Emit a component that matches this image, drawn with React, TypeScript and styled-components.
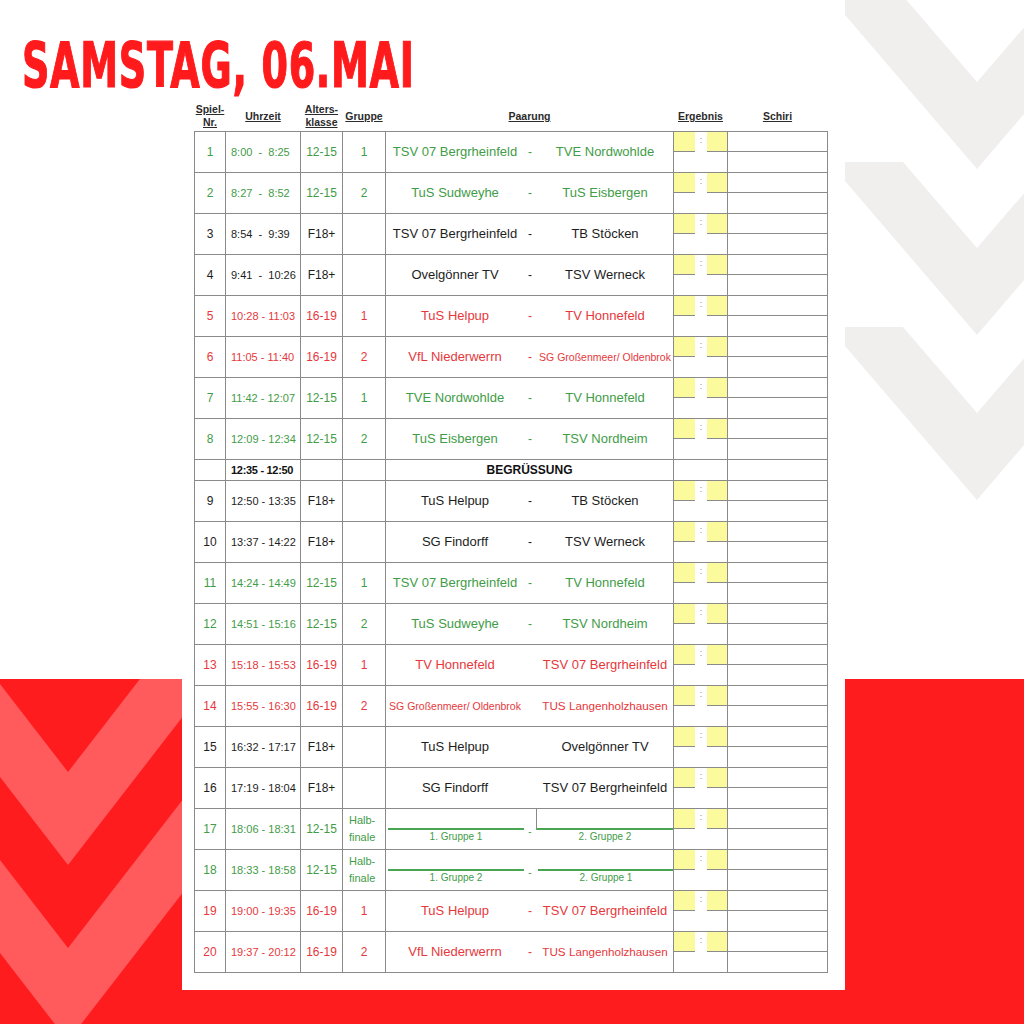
import React from "react";
import styled, { createGlobalStyle } from "styled-components";

type Tone = "green" | "red" | "black";

interface Match {
  nr: number;
  time: string;
  age: string;
  group: string;
  tone: Tone;
  home: string;
  away: string;
  homeSize?: number;
  awaySize?: number;
  dash?: boolean;
  semi?: boolean;
  divider?: boolean;
}

const TONES: Record<Tone, string> = {
  green: "#3f9c47",
  red: "#e6383c",
  black: "#1d1d1d",
};

const LINE = "#8a8a8a";

const before: Match[] = [
  { nr: 1, time: "8:00  -  8:25", age: "12-15", group: "1", tone: "green", home: "TSV 07 Bergrheinfeld", away: "TVE Nordwohlde", dash: true },
  { nr: 2, time: "8:27  -  8:52", age: "12-15", group: "2", tone: "green", home: "TuS Sudweyhe", away: "TuS Eisbergen", dash: true },
  { nr: 3, time: "8:54  -  9:39", age: "F18+", group: "", tone: "black", home: "TSV 07 Bergrheinfeld", away: "TB Stöcken", dash: true },
  { nr: 4, time: "9:41  -  10:26", age: "F18+", group: "", tone: "black", home: "Ovelgönner TV", away: "TSV Werneck", dash: true },
  { nr: 5, time: "10:28 - 11:03", age: "16-19", group: "1", tone: "red", home: "TuS Helpup", away: "TV Honnefeld", dash: true },
  { nr: 6, time: "11:05 - 11:40", age: "16-19", group: "2", tone: "red", home: "VfL Niederwerrn", away: "SG Großenmeer/ Oldenbrok", awaySize: 10.5, dash: true },
  { nr: 7, time: "11:42 - 12:07", age: "12-15", group: "1", tone: "green", home: "TVE Nordwohlde", away: "TV Honnefeld", dash: true },
  { nr: 8, time: "12:09 - 12:34", age: "12-15", group: "2", tone: "green", home: "TuS Eisbergen", away: "TSV Nordheim", dash: true },
];

const after: Match[] = [
  { nr: 9, time: "12:50 - 13:35", age: "F18+", group: "", tone: "black", home: "TuS Helpup", away: "TB Stöcken", dash: true },
  { nr: 10, time: "13:37 - 14:22", age: "F18+", group: "", tone: "black", home: "SG Findorff", away: "TSV Werneck", dash: true },
  { nr: 11, time: "14:24 - 14:49", age: "12-15", group: "1", tone: "green", home: "TSV 07 Bergrheinfeld", away: "TV Honnefeld", dash: true },
  { nr: 12, time: "14:51 - 15:16", age: "12-15", group: "2", tone: "green", home: "TuS Sudweyhe", away: "TSV Nordheim", dash: true },
  { nr: 13, time: "15:18 - 15:53", age: "16-19", group: "1", tone: "red", home: "TV Honnefeld", away: "TSV 07 Bergrheinfeld" },
  { nr: 14, time: "15:55 - 16:30", age: "16-19", group: "2", tone: "red", home: "SG Großenmeer/ Oldenbrok", homeSize: 10.5, away: "TUS Langenholzhausen", awaySize: 11.7 },
  { nr: 15, time: "16:32 - 17:17", age: "F18+", group: "", tone: "black", home: "TuS Helpup", away: "Ovelgönner TV" },
  { nr: 16, time: "17:19 - 18:04", age: "F18+", group: "", tone: "black", home: "SG Findorff", away: "TSV 07 Bergrheinfeld" },
  { nr: 17, time: "18:06 - 18:31", age: "12-15", group: "", tone: "green", home: "1. Gruppe 1", away: "2. Gruppe 2", semi: true, divider: true },
  { nr: 18, time: "18:33 - 18:58", age: "12-15", group: "", tone: "green", home: "1. Gruppe 2", away: "2. Gruppe 1", semi: true },
  { nr: 19, time: "19:00 - 19:35", age: "16-19", group: "1", tone: "red", home: "TuS Helpup", away: "TSV 07 Bergrheinfeld", dash: true },
  { nr: 20, time: "19:37 - 20:12", age: "16-19", group: "2", tone: "red", home: "VfL Niederwerrn", away: "TUS Langenholzhausen", awaySize: 11.7, dash: true },
];

const columns = [31, 75, 42, 43, 288, 54, 100];

const GlobalStyle = createGlobalStyle`
  html, body {
    margin: 0;
    padding: 0;
    background: #ffffff;
  }
  * {
    box-sizing: border-box;
  }
`;

const Page = styled.div`
  position: relative;
  width: 1024px;
  height: 1024px;
  overflow: hidden;
  background: linear-gradient(to bottom, #ffffff 0, #ffffff 679px, #ff1c1e 679px);
  font-family: "Liberation Sans", Arial, sans-serif;
`;

const Backdrop = styled.svg`
  position: absolute;
  inset: 0;
  width: 1024px;
  height: 1024px;
  z-index: 0;
`;

const Content = styled.div`
  position: relative;
  z-index: 1;
  display: flex;
  flex-direction: column;
`;

const TitleBar = styled.div`
  height: 96px;
  padding: 34px 0 0 22px;
`;

const Title = styled.h1`
  display: inline-block;
  margin: 0;
  font-family: "DejaVu Sans Condensed", "Liberation Sans", sans-serif;
  font-weight: 700;
  font-size: 63px;
  line-height: 63px;
  color: #ff1a1c;
  letter-spacing: 1px;
  -webkit-text-stroke: 1.2px #ff1a1c;
  transform-origin: left top;
  transform: scaleX(0.672);
  white-space: nowrap;
`;

const Sheet = styled.div`
  width: 663px;
  height: 894px;
  margin-left: 182px;
  padding: 4px 18px 0 12px;
  background: #ffffff;
`;

const Table = styled.table`
  width: 633px;
  table-layout: fixed;
  border-collapse: collapse;
`;

const Col = styled.col<{ $w: number }>`
  width: ${(p) => p.$w}px;
`;

const Head = styled.th`
  height: 31px;
  padding: 2px 0 0;
  border: none;
  font-size: 10.5px;
  line-height: 13px;
  font-weight: 700;
  color: #2b2b2b;
  text-decoration: underline;
  text-align: center;
  vertical-align: middle;
`;

const Row = styled.tr<{ $tone: Tone }>`
  height: 41px;
  color: ${(p) => TONES[p.$tone]};
`;

const BreakRow = styled.tr`
  height: 21px;
  color: #111111;
`;

const Cell = styled.td<{ $size?: number }>`
  border: 1px solid ${LINE};
  padding: 0;
  font-size: ${(p) => p.$size || 12}px;
  text-align: center;
  vertical-align: middle;
  white-space: pre;
  overflow: hidden;
`;

const TimeCell = styled(Cell)`
  padding-left: 5px;
  font-size: 11px;
  text-align: left;
`;

const BreakTime = styled(TimeCell)`
  font-weight: 700;
  letter-spacing: -0.3px;
`;

const BreakLabel = styled(Cell)`
  font-weight: 700;
`;

const SemiGroup = styled(Cell)`
  padding-left: 6px;
  text-align: left;
  font-size: 11px;
  line-height: 17px;
`;

const PairCell = styled(Cell)`
  vertical-align: top;
`;

const Pair = styled.div`
  display: flex;
  align-items: center;
  height: 40px;
`;

const Side = styled.span<{ $size?: number }>`
  width: 138px;
  flex: none;
  text-align: center;
  white-space: nowrap;
  font-size: ${(p) => p.$size || 13}px;
`;

const Dash = styled.span`
  width: 12px;
  flex: none;
  text-align: center;
  font-size: 12px;
`;

const SemiPair = styled.div`
  display: flex;
  height: 40px;
`;

const SemiSide = styled.div<{ $divider?: boolean }>`
  width: 138px;
  flex: none;
  display: flex;
  flex-direction: column;
  padding-left: ${(p) => (p.$divider ? 0 : 2)}px;
`;

const SemiSlot = styled.div<{ $divider?: boolean }>`
  height: 21px;
  border-bottom: 2px solid #4aa552;
  border-left: ${(p) => (p.$divider ? `1px solid ${LINE}` : "none")};
`;

const SemiLabel = styled.span`
  font-size: 10px;
  line-height: 14px;
  text-align: center;
`;

const SemiDash = styled.span`
  width: 12px;
  flex: none;
  padding-top: 17px;
  text-align: center;
  font-size: 10px;
`;

const ResultCell = styled(Cell)`
  vertical-align: top;
`;

const ScoreLine = styled.div`
  display: grid;
  grid-template-columns: 21px 12px 1fr;
  height: 20px;
`;

const ScoreBox = styled.div`
  background: #fbfb9d;
  border-bottom: 1px solid ${LINE};
`;

const Colon = styled.span`
  font-size: 9px;
  line-height: 16px;
  color: #8a8a8a;
  text-align: center;
`;

const RefTop = styled.div`
  height: 20px;
  border-bottom: 1px solid ${LINE};
`;

const MatchRow = ({ m }: { m: Match }) => (
  <Row $tone={m.tone}>
    <Cell>{m.nr}</Cell>
    <TimeCell>{m.time}</TimeCell>
    <Cell>{m.age}</Cell>
    {m.semi ? (
      <SemiGroup>
        Halb-
        <br />
        finale
      </SemiGroup>
    ) : (
      <Cell>{m.group}</Cell>
    )}
    <PairCell>
      {m.semi ? (
        <SemiPair>
          <SemiSide>
            <SemiSlot />
            <SemiLabel>{m.home}</SemiLabel>
          </SemiSide>
          <SemiDash>-</SemiDash>
          <SemiSide $divider={m.divider}>
            <SemiSlot $divider={m.divider} />
            <SemiLabel>{m.away}</SemiLabel>
          </SemiSide>
        </SemiPair>
      ) : (
        <Pair>
          <Side $size={m.homeSize}>{m.home}</Side>
          <Dash>{m.dash ? "-" : ""}</Dash>
          <Side $size={m.awaySize}>{m.away}</Side>
        </Pair>
      )}
    </PairCell>
    <ResultCell>
      <ScoreLine>
        <ScoreBox />
        <Colon>:</Colon>
        <ScoreBox />
      </ScoreLine>
    </ResultCell>
    <ResultCell>
      <RefTop />
    </ResultCell>
  </Row>
);

// grey chevrons top right, lighter red chevrons inside the red band
const greyChevron = (o: number) =>
  `845,${162 + o} 903,${162 + o} 977,${248 + o} 1051,${162 + o} 1125,${162 + o} 977,${335 + o} 845,${181 + o}`;

const redChevron = (o: number) =>
  `-137,${600 + o} -65,${600 + o} 68,${772 + o} 201,${600 + o} 273,${600 + o} 68,${865 + o}`;

export default function App() {
  return (
    <Page>
      <GlobalStyle />
      <Backdrop viewBox="0 0 1024 1024" aria-hidden="true">
        <defs>
          <clipPath id="band">
            <rect x="0" y="679" width="1024" height="345" />
          </clipPath>
        </defs>
        {[-166, 0, 165].map((o) => (
          <polygon key={o} points={greyChevron(o)} fill="#f1eeee" />
        ))}
        <g clipPath="url(#band)" fill="#ff5a5c">
          <polygon points={redChevron(0)} />
          <polygon points={redChevron(176)} />
        </g>
      </Backdrop>
      <Content>
        <TitleBar>
          <Title>SAMSTAG, 06.MAI</Title>
        </TitleBar>
        <Sheet>
          <Table>
            <colgroup>
              {columns.map((w, i) => (
                <Col key={i} $w={w} />
              ))}
            </colgroup>
            <thead>
              <tr>
                <Head>
                  Spiel-
                  <br />
                  Nr.
                </Head>
                <Head>Uhrzeit</Head>
                <Head>
                  Alters-
                  <br />
                  klasse
                </Head>
                <Head>Gruppe</Head>
                <Head>Paarung</Head>
                <Head>Ergebnis</Head>
                <Head>Schiri</Head>
              </tr>
            </thead>
            <tbody>
              {before.map((m) => (
                <MatchRow key={m.nr} m={m} />
              ))}
              <BreakRow>
                <Cell />
                <BreakTime>12:35 - 12:50</BreakTime>
                <Cell />
                <Cell />
                <BreakLabel>BEGRÜSSUNG</BreakLabel>
                <Cell />
                <Cell />
              </BreakRow>
              {after.map((m) => (
                <MatchRow key={m.nr} m={m} />
              ))}
            </tbody>
          </Table>
        </Sheet>
      </Content>
    </Page>
  );
}
